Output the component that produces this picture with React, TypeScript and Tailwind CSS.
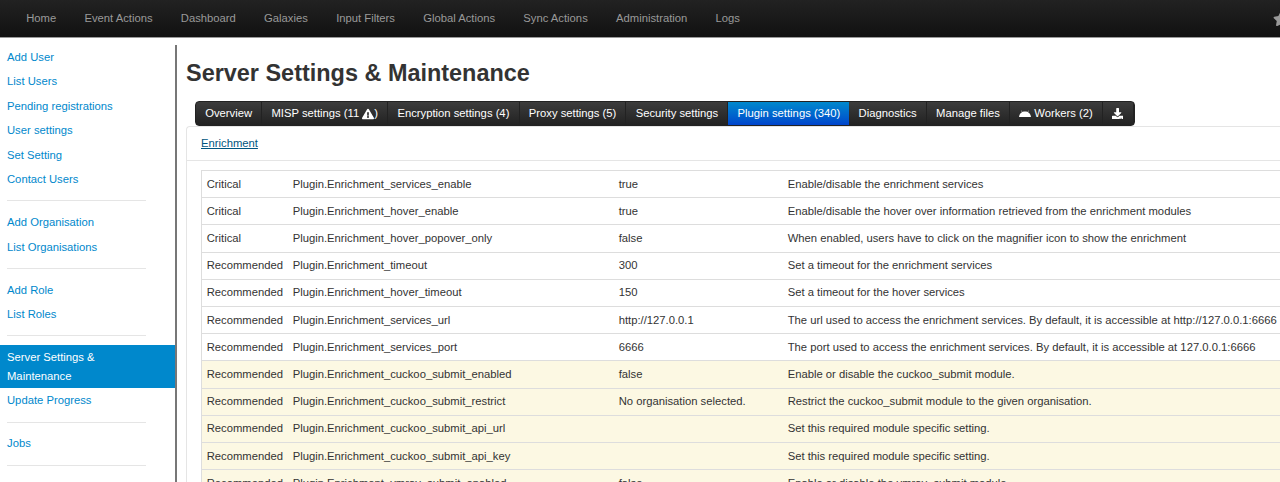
import { FaDownload, FaExclamationTriangle, FaStar } from "react-icons/fa";

const navItems = [
  "Home",
  "Event Actions",
  "Dashboard",
  "Galaxies",
  "Input Filters",
  "Global Actions",
  "Sync Actions",
  "Administration",
  "Logs",
];

const rows = [
  ["Critical", "Plugin.Enrichment_services_enable", "true", "Enable/disable the enrichment services", ""],
  ["Critical", "Plugin.Enrichment_hover_enable", "true", "Enable/disable the hover over information retrieved from the enrichment modules", ""],
  ["Critical", "Plugin.Enrichment_hover_popover_only", "false", "When enabled, users have to click on the magnifier icon to show the enrichment", ""],
  ["Recommended", "Plugin.Enrichment_timeout", "300", "Set a timeout for the enrichment services", ""],
  ["Recommended", "Plugin.Enrichment_hover_timeout", "150", "Set a timeout for the hover services", ""],
  ["Recommended", "Plugin.Enrichment_services_url", "http://127.0.0.1", "The url used to access the enrichment services. By default, it is accessible at http://127.0.0.1:6666", ""],
  ["Recommended", "Plugin.Enrichment_services_port", "6666", "The port used to access the enrichment services. By default, it is accessible at 127.0.0.1:6666", ""],
  ["Recommended", "Plugin.Enrichment_cuckoo_submit_enabled", "false", "Enable or disable the cuckoo_submit module.", "warn"],
  ["Recommended", "Plugin.Enrichment_cuckoo_submit_restrict", "No organisation selected.", "Restrict the cuckoo_submit module to the given organisation.", "warn"],
  ["Recommended", "Plugin.Enrichment_cuckoo_submit_api_url", "", "Set this required module specific setting.", "warn"],
  ["Recommended", "Plugin.Enrichment_cuckoo_submit_api_key", "", "Set this required module specific setting.", "warn"],
  ["Recommended", "Plugin.Enrichment_vmray_submit_enabled", "false", "Enable or disable the vmray_submit module.", "warn"],
];

const SideLink = ({ label }: { label: string }) => (
  <a className="block h-[24.4px] px-[7px] leading-[24.4px] text-[#0088cc]">{label}</a>
);

const Divider = () => <div className="mx-[7px] my-[8.9px] h-px w-[139px] bg-[#e5e5e5]" />;

const Tab = ({ active, children }: { active?: boolean; children: React.ReactNode }) => (
  <div
    className={
      active
        ? "flex h-full items-center bg-gradient-to-b from-[#0088cc] to-[#0044cc] px-[9.2px] text-white"
        : "flex h-full items-center border-r border-[#222] px-[9.2px] text-white"
    }
  >
    {children}
  </div>
);

const AndroidHead = () => (
  <svg viewBox="0 0 14 8" className="mr-[3px] h-[7px] w-[12px] fill-white">
    <path d="M0 8C0.3 5.4 1.6 3.5 3.5 2.5L2.6 0.6 3 0.4 4 2.2C5.9 1.5 8.1 1.5 10 2.2L11 0.4 11.4 0.6 10.5 2.5C12.4 3.5 13.7 5.4 14 8Z" />
  </svg>
);

const App = () => {
  return (
    <div className="h-screen overflow-hidden bg-white font-['Liberation_Sans',Arial,sans-serif] text-[11.25px] text-[#333]">
      <div className="flex h-[38px] items-center border-b border-[#999] bg-gradient-to-b from-[#222222] to-[#111111] pl-[12px]">
        {navItems.map((item) => (
          <a key={item} className="px-[14.13px] text-[#999]">
            {item}
          </a>
        ))}
        <FaStar className="ml-auto mr-[-9px] text-[16px] text-[#999]" />
      </div>

      <div className="flex">
        <div className="mt-[7px] w-[177px] shrink-0 border-r-2 border-[#777] pb-[30px]">
          <SideLink label="Add User" />
          <SideLink label="List Users" />
          <SideLink label="Pending registrations" />
          <SideLink label="User settings" />
          <SideLink label="Set Setting" />
          <SideLink label="Contact Users" />
          <Divider />
          <SideLink label="Add Organisation" />
          <SideLink label="List Organisations" />
          <Divider />
          <SideLink label="Add Role" />
          <SideLink label="List Roles" />
          <Divider />
          <div className="h-[43px] bg-[#0088cc] px-[7px] pt-[3px] leading-[18.6px] text-white">
            Server Settings &amp;
            <br />
            Maintenance
          </div>
          <SideLink label="Update Progress" />
          <Divider />
          <SideLink label="Jobs" />
          <Divider />
        </div>

        <div className="w-[1200px] shrink-0 pl-[9px]">
          <h2 className="mt-[16px] h-[38px] text-[23.44px] leading-[38px] font-bold">
            Server Settings &amp; Maintenance
          </h2>

          <div className="relative z-10 ml-[9px] mt-[9px] flex h-[25px] w-fit items-center overflow-hidden rounded-[4px] border border-[#222] bg-gradient-to-b from-[#3c3c3c] to-[#222222]">
            <Tab>Overview</Tab>
            <Tab>
              MISP settings (11&nbsp;
              <FaExclamationTriangle className="text-[12px]" />)
            </Tab>
            <Tab>Encryption settings (4)</Tab>
            <Tab>Proxy settings (5)</Tab>
            <Tab>Security settings</Tab>
            <Tab active>Plugin settings (340)</Tab>
            <Tab>Diagnostics</Tab>
            <Tab>Manage files</Tab>
            <Tab>
              <AndroidHead />
              Workers (2)
            </Tab>
            <Tab>
              <FaDownload className="text-[11.25px]" />
            </Tab>
          </div>

          <div className="rounded-tl-[4px] border-t border-l border-[#e5e5e5]">
            <div className="flex h-[34px] items-center border-b border-[#e5e5e5] pl-[14px]">
              <a className="text-[#005580] underline">Enrichment</a>
            </div>
            <div className="mt-[9px] pl-[14px]">
              <table className="w-[1100px] table-fixed border-collapse border border-[#ddd]">
                <colgroup>
                  <col className="w-[86.5px]" />
                  <col className="w-[326px]" />
                  <col className="w-[169px]" />
                  <col />
                </colgroup>
                <tbody>
                  {rows.map((row) => (
                    <tr
                      key={row[1]}
                      className={
                        row[4] === "warn"
                          ? "h-[27.2px] border-t border-[#ddd] bg-[#fcf8e3]"
                          : "h-[27.2px] border-t border-[#ddd]"
                      }
                    >
                      <td className="px-[4.7px] whitespace-nowrap">{row[0]}</td>
                      <td className="px-[4.7px] whitespace-nowrap">{row[1]}</td>
                      <td className="px-[4.7px] whitespace-nowrap">{row[2]}</td>
                      <td className="px-[4.7px] whitespace-nowrap">{row[3]}</td>
                    </tr>
                  ))}
                </tbody>
              </table>
            </div>
          </div>
        </div>
      </div>
    </div>
  );
};

export default App;
